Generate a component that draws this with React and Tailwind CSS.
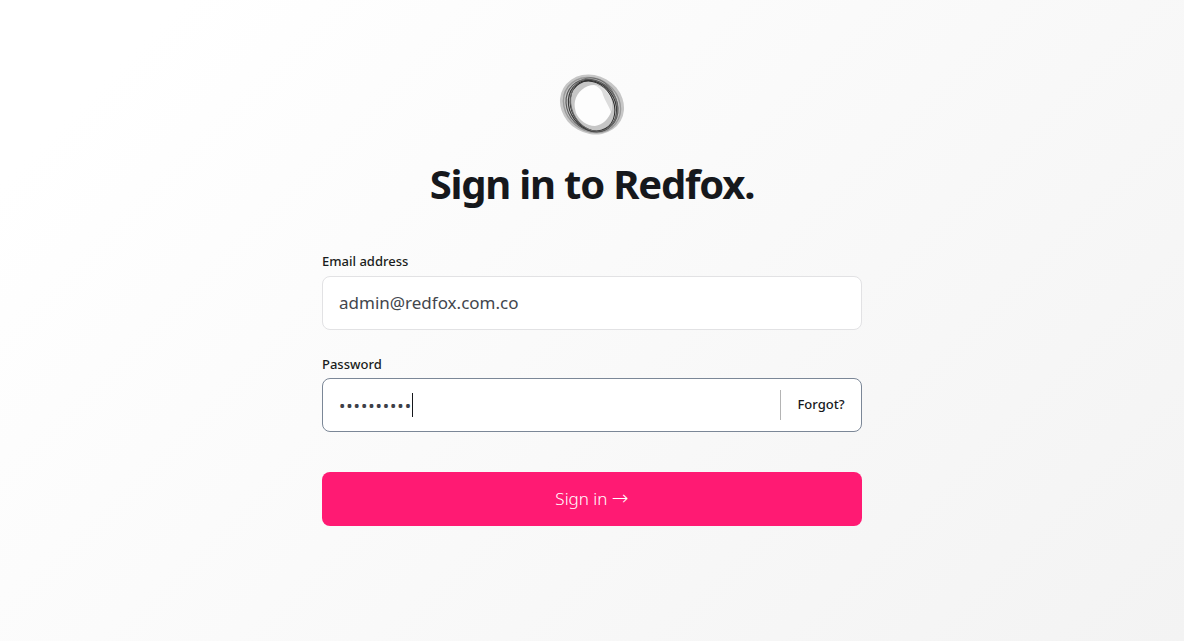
const rings = [
  { cx: 35, cy: 33, rx: 30, ry: 26, rot: 38, color: '#9a9a9a', w: 1.4 },
  { cx: 35, cy: 33.5, rx: 28, ry: 24, rot: 46, color: '#5c5c5c', w: 1.2 },
  { cx: 35.5, cy: 34, rx: 27, ry: 22.5, rot: 54, color: '#3a3a3a', w: 1.2 },
  { cx: 35.5, cy: 34, rx: 26, ry: 21, rot: 60, color: '#2c2c2c', w: 1 },
  { cx: 37, cy: 32.5, rx: 27.5, ry: 22.5, rot: 66, color: '#6e6e6e', w: 1 },
]

function Logo() {
  return (
    <svg width="70" height="66" viewBox="0 0 70 66" fill="none">
      <ellipse cx="35" cy="32.5" rx="33" ry="29" transform="rotate(30 35 32.5)" fill="#c6c6c6" />
      {rings.map((r) => (
        <ellipse
          key={r.rot}
          cx={r.cx}
          cy={r.cy}
          rx={r.rx}
          ry={r.ry}
          transform={`rotate(${r.rot} ${r.cx} ${r.cy})`}
          stroke={r.color}
          strokeWidth={r.w}
        />
      ))}
      <path
        d="M18 29c2-9 10-16 19-16 9 1 15 7 17 14 1 5 1 9 0 13-2 6-8 13-16 14-8 0-16-6-19-13-1-4-2-8-1-12Z"
        fill="#fdfdfd"
      />
      <path d="M37 13c8 1 15 7 17 14 1 5 1 9 0 13-2-6-6-11-8-17-1-5-4-8-9-10Z" fill="#dcdcdc" />
    </svg>
  )
}

export default function App() {
  return (
    <div className="flex h-[641px] flex-col items-center overflow-hidden bg-[linear-gradient(135deg,#ffffff_0%,#ffffff_10%,#f3f3f3_100%)] pt-[72px] font-['Noto_Sans',sans-serif]">
      <Logo />
      <h1 className="mt-[16px] text-[40px] leading-[60px] font-bold tracking-[-1.2px] text-[#16181c]">
        Sign in to Redfox.
      </h1>

      <form className="mt-[38px] flex w-[540px] flex-col">
        <label className="text-[13px] leading-[18px] font-medium text-[#1a1c20]">Email address</label>
        <div className="mt-[6px] flex h-[54px] items-center rounded-lg border border-[#e2e2e4] bg-white px-4 text-[17px] text-[#43464d]">
          admin@redfox.com.co
        </div>

        <label className="mt-[25px] text-[13px] leading-[18px] font-medium text-[#1a1c20]">Password</label>
        <div className="mt-[5px] flex h-[54px] items-center rounded-lg border border-[#7b8797] bg-white pl-4">
          <span className="text-[17px] leading-none tracking-[0.9px] text-[#3d4048]">••••••••••</span>
          <span className="h-[24px] w-px bg-[#16181c]" />
          <span className="ml-auto h-[30px] w-px bg-[#b4b4b4]" />
          <button type="button" className="w-[80px] text-center text-[13px] font-medium text-[#16181c]">
            Forgot?
          </button>
        </div>

        <button type="button" className="mt-[40px] h-[54px] rounded-lg bg-[#ff1a73] text-[17px] font-light text-white">
          Sign in <span className="font-['DejaVu_Sans',sans-serif] text-[20px] leading-none">→</span>
        </button>
      </form>
    </div>
  )
}
